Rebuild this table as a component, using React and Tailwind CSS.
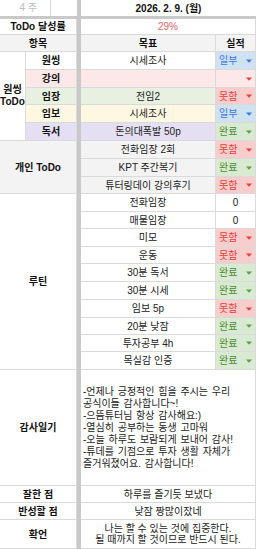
import React from 'react';

const STATUS = {
  done: { label: '완료', cls: 'bg-[#d9ead3] text-[#4a8a2e]', tri: '#5f9e44' },
  fail: { label: '못함', cls: 'bg-[#f8cdcb] text-[#e3403a]', tri: '#e3403a' },
  part: { label: '일부', cls: 'bg-[#cfe2f3] text-[#3c78d8]', tri: '#3c78d8' },
  none: { label: '', cls: 'bg-[#fce8e8] text-[#e3403a]', tri: '#e3403a' },
};

const cell = 'border-b border-r border-[#dadada] flex items-center';

const Result = ({ status }) => {
  if (status === '0') {
    return <div className={`${cell} justify-center`}>0</div>;
  }
  const s = STATUS[status];
  return (
    <div className={`${cell} justify-between pl-[3px] pr-[3px] ${s.cls}`}>
      <span>{s.label}</span>
      <svg width="6" height="4" viewBox="0 0 6 4">
        <path d="M0 0.5h6L3 3.8z" fill={s.tri} />
      </svg>
    </div>
  );
};

const oneThing = [
  { name: '원씽', goal: '시세조사', status: 'part', bg: 'bg-white' },
  { name: '강의', goal: '', status: 'none', bg: 'bg-[#fce8e8]' },
  { name: '임장', goal: '전임2', status: 'fail', bg: 'bg-[#e7f0e1]' },
  { name: '임보', goal: '시세조사', status: 'part', bg: 'bg-[#fef7e1]' },
  { name: '독서', goal: '돈의대폭발 50p', status: 'done', bg: 'bg-[#e4dff2]' },
];

const personal = [
  { goal: '전화임장 2회', status: 'fail' },
  { goal: 'KPT 주간복기', status: 'done' },
  { goal: '튜터링데이 강의후기', status: 'fail' },
];

const routine = [
  { goal: '전화임장', status: '0' },
  { goal: '매물임장', status: '0' },
  { goal: '미모', status: 'fail' },
  { goal: '운동', status: 'fail' },
  { goal: '30분 독서', status: 'done' },
  { goal: '30분 시세', status: 'done' },
  { goal: '임보 5p', status: 'fail' },
  { goal: '20분 낮잠', status: 'done' },
  { goal: '투자공부 4h', status: 'done' },
  { goal: '목실감 인증', status: 'done' },
];

const thanks = [
  '-언제나 긍정적인 힘을 주시는 우리',
  '공식이들 감사합니다~!',
  '-으뜸튜터님 항상 감사해요:)',
  '-열심히 공부하는 동생 고마워',
  '-오늘 하루도 보람되게 보내어 감사!',
  '-튜데를 기점으로 투자 생활 자체가',
  '즐거워졌어요. 감사합니다!',
];

export default function App() {
  return (
    <div className="w-[256px] h-[549px] overflow-hidden bg-white text-[#222] text-[10px] font-['Liberation_Sans','Noto_Sans_CJK_KR',sans-serif]">
      <div className="grid grid-cols-[26px_51px_4px_135px_40px] grid-rows-[16px_3px_16px_17px_18px_18px_17px_18px_18px_18px_18px_17px_18px_17px_18px_17px_18px_18px_18px_17px_17px_18px_116px_17px_17px_29px]">
        <div className="col-start-3 row-start-1 row-span-full bg-[#c9c9c9]" />
        <div className="col-span-full row-start-2 bg-[#c9c9c9]" />

        <div className="col-span-2 flex text-[#bdbdbd]">
          <span className="w-[26px] text-right pr-[1px] leading-[16px]">4</span>
          <span className="w-[25px] pl-[2px] leading-[16px] border-r border-[#dadada]">주</span>
        </div>
        <div className="col-span-2 flex items-center justify-center font-bold text-[#111]">2026. 2. 9. (월)</div>

        <div className={`${cell} col-span-2 justify-center font-bold text-[#111]`}>ToDo 달성률</div>
        <div className={`${cell} col-span-2 justify-center text-[#e06666]`}>29%</div>

        <div className={`${cell} col-span-2 justify-center font-bold text-[#111] bg-[#f3f3f3]`}>항목</div>
        <div className={`${cell} justify-center font-bold text-[#111] bg-[#f3f3f3]`}>목표</div>
        <div className={`${cell} justify-center font-bold text-[#111] bg-[#f3f3f3]`}>실적</div>

        {oneThing.map((r, i) => (
          <React.Fragment key={r.name}>
            {i === 0 && (
              <div className={`${cell} row-span-5 flex-col justify-center font-bold text-[#111] leading-[12px]`}>
                <span>원씽</span>
                <span>ToDo</span>
              </div>
            )}
            <div className={`${cell} justify-center font-bold text-[#111] ${r.bg}`}>{r.name}</div>
            <div className={`${cell} justify-center ${r.bg}`}>{r.goal}</div>
            <Result status={r.status} />
          </React.Fragment>
        ))}

        {personal.map((r, i) => (
          <React.Fragment key={r.goal}>
            {i === 0 && (
              <div className={`${cell} col-span-2 row-span-3 justify-center font-bold text-[#111] bg-[#f3f3f3]`}>개인 ToDo</div>
            )}
            <div className={`${cell} justify-center bg-[#f3f3f3]`}>{r.goal}</div>
            <Result status={r.status} />
          </React.Fragment>
        ))}

        {routine.map((r, i) => (
          <React.Fragment key={r.goal}>
            {i === 0 && (
              <div className={`${cell} col-span-2 row-span-10 justify-center font-bold text-[#111]`}>루틴</div>
            )}
            <div className={`${cell} justify-center`}>{r.goal}</div>
            <Result status={r.status} />
          </React.Fragment>
        ))}

        <div className={`${cell} col-span-2 justify-center font-bold text-[#111]`}>감사일기</div>
        <div className={`${cell} col-span-2 flex-col items-start justify-center pl-[2px] leading-[12px] [word-spacing:1px]`}>
          {thanks.map((t) => (
            <span key={t}>{t}</span>
          ))}
        </div>

        <div className={`${cell} col-span-2 justify-center font-bold text-[#111]`}>잘한 점</div>
        <div className={`${cell} col-span-2 justify-center`}>하루를 즐기듯 보냈다</div>

        <div className={`${cell} col-span-2 justify-center font-bold text-[#111]`}>반성할 점</div>
        <div className={`${cell} col-span-2 justify-center`}>낮잠 짱많이잤네</div>

        <div className={`${cell} col-span-2 justify-center font-bold text-[#111]`}>확언</div>
        <div className={`${cell} col-span-2 flex-col justify-center leading-[11px]`}>
          <span>나는 할 수 있는 것에 집중한다.</span>
          <span>될 때까지 할 것이므로 반드시 된다.</span>
        </div>
      </div>
    </div>
  );
}
